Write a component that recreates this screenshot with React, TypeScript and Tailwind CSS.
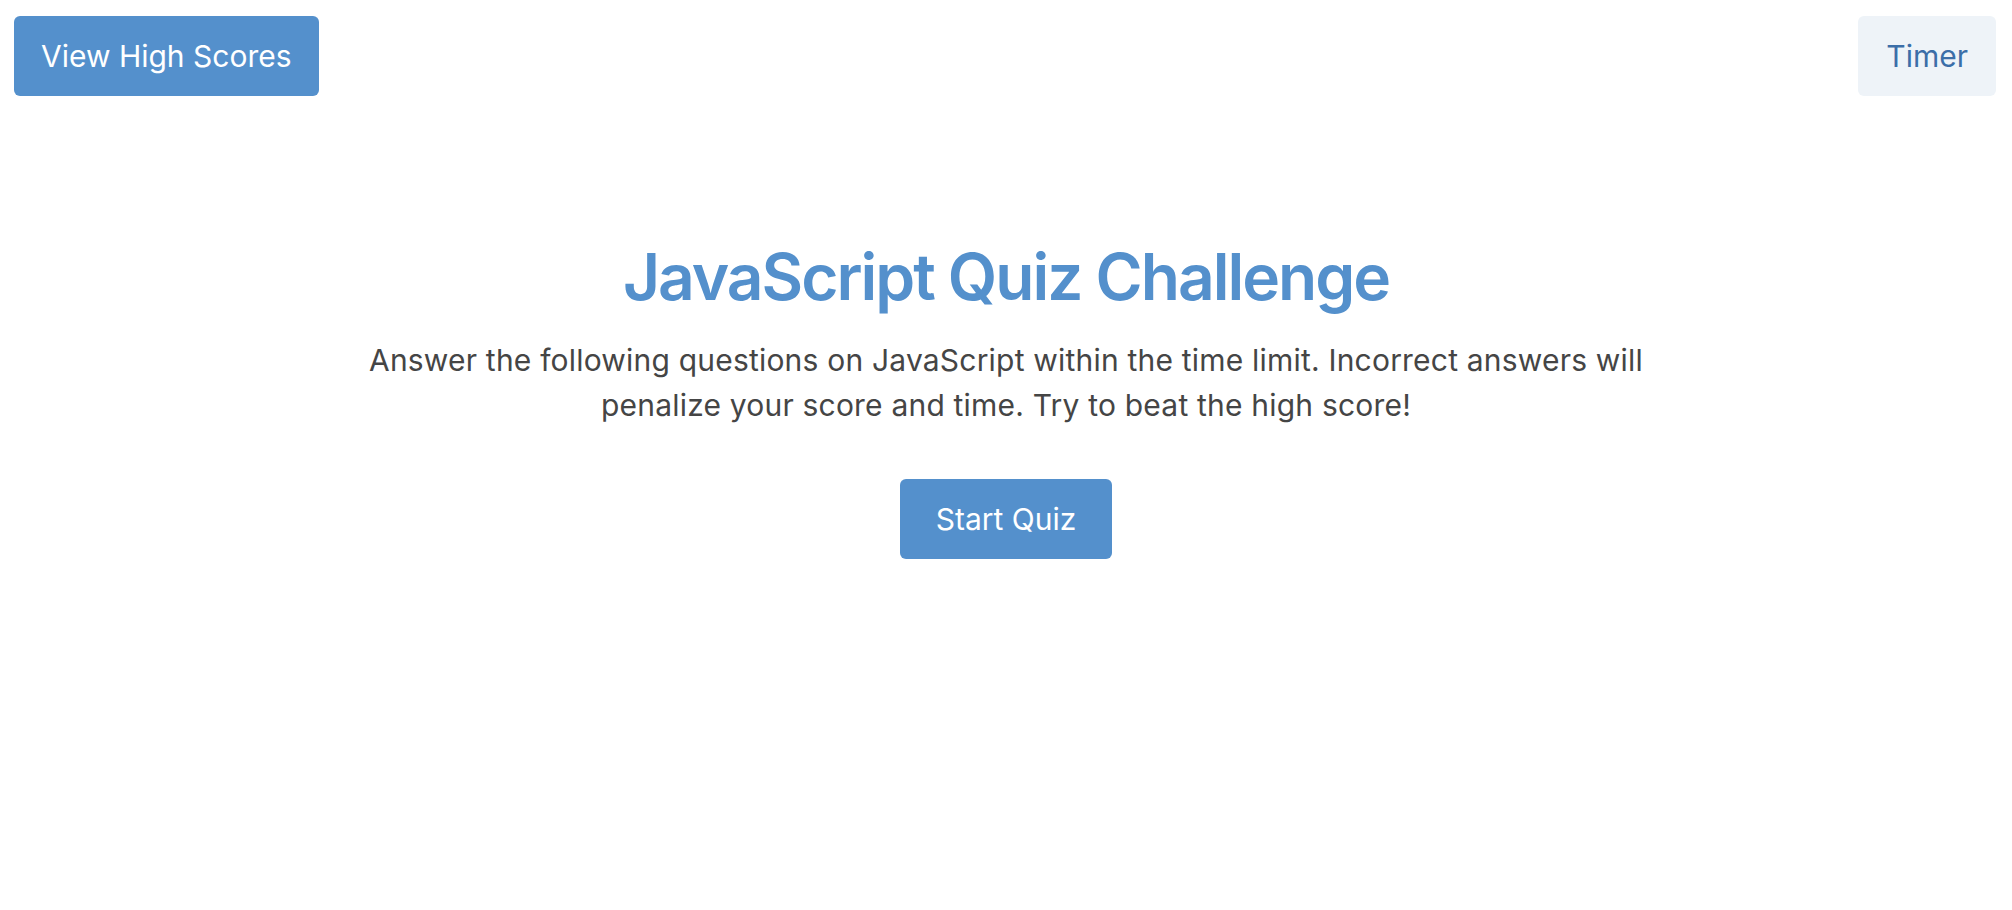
const font = { fontFamily: "Inter, 'Noto Sans', sans-serif" };

export default function App() {
  return (
    <div className="min-h-[910px] bg-white" style={font}>
      <header className="flex justify-between items-start pt-4 pl-[14px] pr-4">
        <button className="h-20 px-[27px] rounded-md bg-[#5490cc] text-white text-[30px]">
          View High Scores
        </button>
        <button className="h-20 px-7 rounded-md bg-[#eef3f8] text-[#3b6ea8] text-[30px]">
          Timer
        </button>
      </header>
      <main className="flex flex-col items-center mt-[142px]">
        <h1 className="text-[64px] leading-[77px] font-semibold tracking-[-2px] text-[#5490cc]">
          JavaScript Quiz Challenge
        </h1>
        <p className="mt-[23px] max-w-[1320px] text-center text-[30px] leading-[45px] tracking-[0.2px] text-[#454545]">
          Answer the following questions on JavaScript within the time limit. Incorrect answers will penalize
          your score and time. Try to beat the high score!
        </p>
        <button className="mt-[51px] h-20 px-9 rounded-md bg-[#5490cc] text-white text-[30px]">
          Start Quiz
        </button>
      </main>
    </div>
  );
}
